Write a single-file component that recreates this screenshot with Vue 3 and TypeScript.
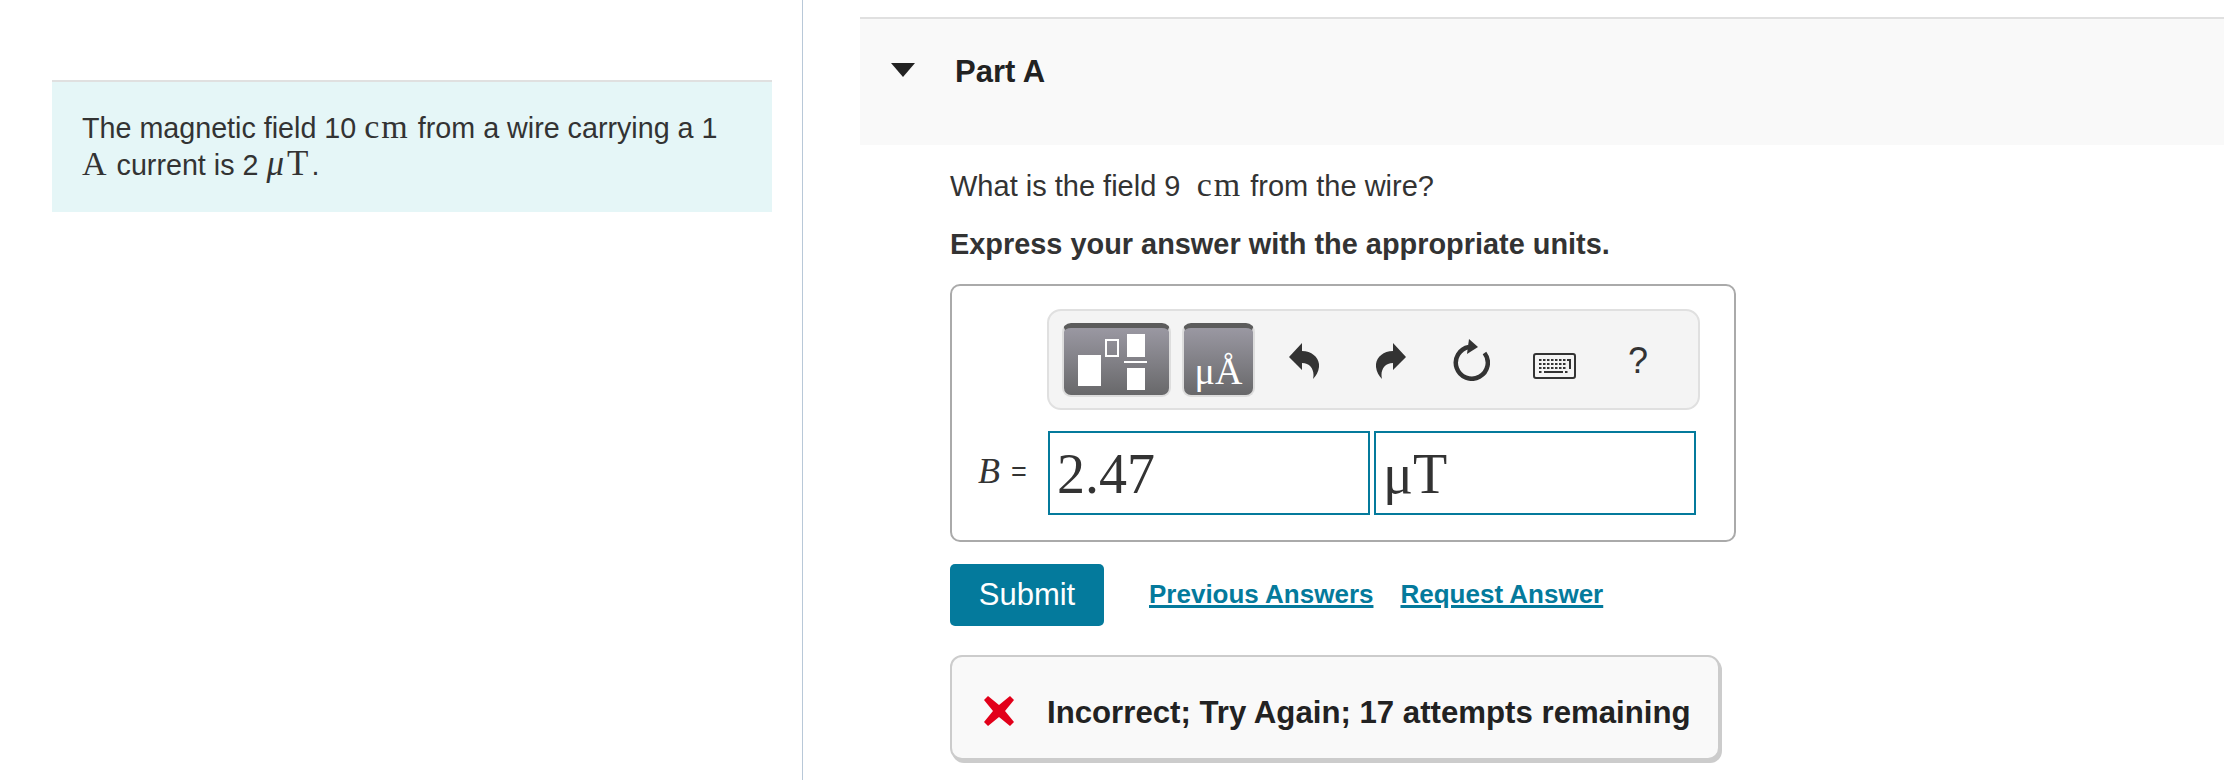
<script setup lang="ts">
const kbRows: { y: number; xs: number[] }[] = [
  { y: 6, xs: [6, 10, 14, 18, 22, 26, 30, 34] },
  { y: 10, xs: [6, 10, 14, 18, 22, 26, 30] },
  { y: 14, xs: [6, 10, 14, 18, 22, 26, 30] },
  { y: 18, xs: [6, 32] },
]
</script>

<template>
  <div class="page">
    <aside class="left">
      <div class="intro">
        The magnetic field 10 <span class="math">cm</span> from a wire carrying a 1<br />
        <span class="math">A</span> current is 2 <span class="math micro"><i>μ</i>T</span>.
      </div>
    </aside>

    <main class="right">
      <header class="part-head">
        <span class="caret"></span>
        <h2>Part A</h2>
      </header>

      <section class="part-body">
        <p class="question">What is the field 9 &nbsp;<span class="math">cm</span> from the wire?</p>
        <p class="hint">Express your answer with the appropriate units.</p>

        <div class="editor">
          <div class="toolbar">
            <div class="tool-btn templates">
              <svg width="105" height="70" viewBox="0 0 105 70">
                <rect x="14" y="30" width="23" height="31" fill="#fff" />
                <rect x="42" y="15" width="12" height="16" fill="none" stroke="#fff" stroke-width="2" />
                <rect x="63" y="9" width="18" height="23" fill="#fff" />
                <rect x="60" y="36" width="23" height="2" fill="#fff" />
                <rect x="63" y="43" width="18" height="22" fill="#fff" />
              </svg>
            </div>
            <div class="tool-btn symbols">μÅ</div>

            <svg class="ico undo" width="30" height="36" viewBox="0 0 30 36">
              <path d="M0 14 13 0V8C24 8 31 16 30 24 29.500 29 27 33 24 36 26 28 22 20 13 20V27Z" fill="#333" />
            </svg>
            <svg class="ico redo" width="30" height="36" viewBox="0 0 30 36">
              <path d="M30 14 17 0V8C6 8-1 16 0 24 .5 29 3 33 6 36 4 28 8 20 17 20V27Z" fill="#333" />
            </svg>
            <svg class="ico reset" width="40" height="42" viewBox="0 0 40 42">
              <path d="M34.500 14A16 16 0 1 1 19 8" fill="none" stroke="#333" stroke-width="4.500" />
              <path d="M19 0 28 8 17 15Z" fill="#333" />
            </svg>
            <svg class="ico keyboard" width="43" height="26" viewBox="0 0 43 26">
              <rect x="1" y="1" width="41" height="24" rx="2" fill="#f4f4f4" stroke="#333" stroke-width="2" />
              <g v-for="row in kbRows" :key="row.y">
                <rect v-for="x in row.xs" :key="x" :x="x" :y="row.y" width="2.500" height="2" fill="#333" />
              </g>
              <rect x="11" y="18" width="19" height="2" fill="#333" />
              <rect x="36" y="6" width="2" height="10" fill="#333" />
            </svg>
            <span class="help">?</span>
          </div>

          <div class="answer-row">
            <span class="label"><i>B</i> <span class="eq">=</span></span>
            <div class="field value">2.47</div>
            <div class="field units">μT</div>
          </div>
        </div>

        <div class="actions">
          <button class="submit" type="button">Submit</button>
          <a class="link first">Previous Answers</a>
          <a class="link">Request Answer</a>
        </div>

        <div class="feedback">
          <svg width="30" height="30" viewBox="0 0 30 30">
            <path d="M4 0 15 9 26 0 30 4 21 15 30 26 26 30 15 21 4 30 0 26 9 15 0 4Z" fill="#e2001a" />
          </svg>
          <span class="feedback-text">Incorrect; Try Again; 17 attempts remaining</span>
        </div>
      </section>
    </main>
  </div>
</template>

<style>
html, body { margin: 0; background: #fff; }
</style>

<style scoped>
.page {
  display: flex;
  height: 780px;
  overflow: hidden;
  font-family: "Liberation Sans", Arial, sans-serif;
  color: #333;
}
.left {
  flex: none;
  box-sizing: border-box;
  width: 803px;
  padding: 80px 30px 0 52px;
  border-right: 1px solid #b8c8d8;
}
.intro {
  box-sizing: border-box;
  height: 132px;
  padding: 28px 30px 0;
  border-top: 2px solid #e0e0e0;
  background: #e5f6f7;
  font-size: 28.700px;
  line-height: 36px;
  white-space: nowrap;
}
.math { font-family: "Liberation Serif", serif; font-size: 34px; letter-spacing: 2px; line-height: 1; }
.micro { font-size: 35px; letter-spacing: 3px; }

.right { flex: 1; min-width: 0; padding: 17px 0 0 57px; }
.part-head {
  box-sizing: border-box;
  display: flex;
  height: 128px;
  border-top: 2px solid #e0e0e0;
  background: #f9f9f9;
  padding: 31px 0 0 31px;
  color: #222;
}
.caret {
  width: 0;
  height: 0;
  margin: 13px 40px 0 0;
  border-left: 12px solid transparent;
  border-right: 12px solid transparent;
  border-top: 14px solid #222;
}
h2 { margin: 0; font-size: 31px; line-height: 44px; font-weight: 700; }

.part-body { padding-left: 90px; }
.question { margin: 0; padding-top: 23px; font-size: 29px; line-height: 36px; }
.hint { margin: 22px 0 0; font-size: 28.900px; line-height: 36px; font-weight: 700; }

.editor {
  box-sizing: border-box;
  width: 786px;
  height: 258px;
  margin-top: 22px;
  border: 2px solid #aaa;
  border-radius: 10px;
  padding: 23px 0 0 95px;
}
.toolbar {
  box-sizing: border-box;
  display: flex;
  align-items: flex-start;
  width: 653px;
  height: 101px;
  padding: 12px 0 0 13px;
  border: 2px solid #e0e0e0;
  border-radius: 14px;
  background: #f4f4f4;
}
.tool-btn {
  box-sizing: border-box;
  flex: none;
  height: 74px;
  border: 2px solid #ddd;
  border-top: 5px solid #5c5c5c;
  border-radius: 9px;
  background: linear-gradient(#9a98a2, #68686a);
}
.templates { width: 109px; }
.templates svg { display: block; margin-top: -3px; }
.symbols {
  width: 73px;
  margin-left: 11px;
  padding-top: 3px;
  color: #fff;
  font-family: "Liberation Serif", serif;
  font-size: 38px;
  line-height: 80px;
  text-align: center;
  overflow: hidden;
}
.ico { flex: none; }
.undo { margin: 20px 0 0 34px; }
.redo { margin: 20px 0 0 57px; }
.reset { margin: 16px 0 0 44px; }
.keyboard { margin: 30px 0 0 43px; }
.help { flex: none; margin: 13px 0 0 52px; font-size: 36px; line-height: 50px; color: #333; }

.answer-row { display: flex; align-items: flex-start; margin: 21px 0 0 -69px; }
.label { width: 70px; margin-top: 18px; font-family: "Liberation Serif", serif; font-size: 36px; line-height: 44px; white-space: nowrap; }
.eq { margin-left: 2px; font-family: "Liberation Sans", sans-serif; font-size: 27px; vertical-align: 2px; }
.field {
  box-sizing: border-box;
  width: 322px;
  height: 84px;
  border: 2px solid #047a9c;
  padding-left: 7px;
  font-family: "Liberation Serif", serif;
  font-size: 56px;
  line-height: 82px;
}
.units { margin-left: 4px; }

.actions { display: flex; align-items: flex-start; margin-top: 22px; }
.submit {
  width: 154px;
  height: 62px;
  border: 0;
  border-radius: 5px;
  background: #047a9c;
  color: #fff;
  font-family: inherit;
  font-size: 31px;
  padding: 0;
}
.link {
  margin: 12px 0 0 27px;
  color: #047a9c;
  font-size: 26px;
  line-height: 36px;
  font-weight: 700;
  text-decoration: underline;
  text-decoration-thickness: 3px;
}
.link.first { margin-left: 45px; }

.feedback {
  box-sizing: border-box;
  display: flex;
  align-items: center;
  gap: 33px;
  width: 770px;
  height: 105px;
  margin-top: 29px;
  padding: 6px 0 0 32px;
  border: 2px solid #ccc;
  border-radius: 12px;
  background: #f9f9f9;
  box-shadow: 2px 3px 0 #ccc;
  color: #222;
  font-size: 31.200px;
  font-weight: 700;
}
.feedback-text { padding-top: 4px; }
</style>
